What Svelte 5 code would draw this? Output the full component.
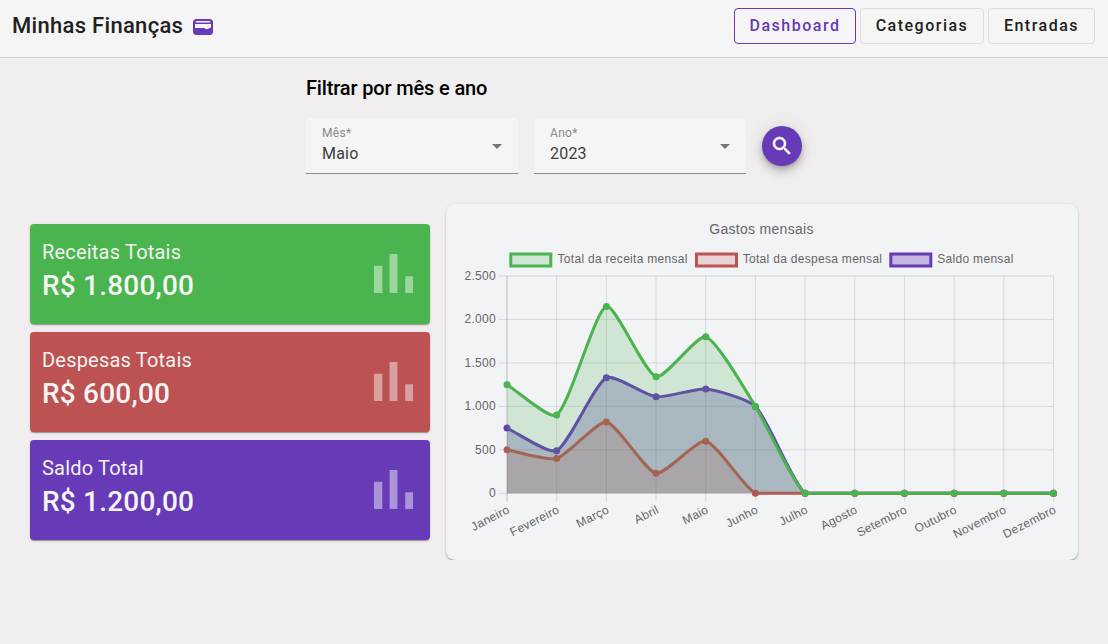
<script>
  const W = 632, H = 356;
  const left = 61, right = 607.5, top = 72, bottom = 289.3;
  const tension = 0.2;
  const labels = ['Janeiro','Fevereiro','Março','Abril','Maio','Junho','Julho','Agosto','Setembro','Outubro','Novembro','Dezembro'];
  const stepX = (right - left) / 11;
  const xAt = (i) => left + i * stepX;
  const yAt = (v) => bottom - (v / 2500) * (bottom - top);
  const clamp = (v, a, b) => Math.min(b, Math.max(a, v));

  function curve(values) {
    const pts = values.map((v, i) => ({ x: xAt(i), y: yAt(v) }));
    const cps = pts.map((p, i) => {
      const prev = pts[i - 1] || p;
      const next = pts[i + 1] || p;
      const d01 = Math.hypot(p.x - prev.x, p.y - prev.y);
      const d12 = Math.hypot(next.x - p.x, next.y - p.y);
      const sum = d01 + d12 || 1;
      const fa = tension * d01 / sum;
      const fb = tension * d12 / sum;
      return {
        px: clamp(p.x - fa * (next.x - prev.x), left, right),
        py: clamp(p.y - fa * (next.y - prev.y), top, bottom),
        nx: clamp(p.x + fb * (next.x - prev.x), left, right),
        ny: clamp(p.y + fb * (next.y - prev.y), top, bottom)
      };
    });
    let d = `M${pts[0].x} ${pts[0].y}`;
    for (let i = 1; i < pts.length; i++) {
      d += `C${cps[i - 1].nx} ${cps[i - 1].ny} ${cps[i].px} ${cps[i].py} ${pts[i].x} ${pts[i].y}`;
    }
    return { pts, line: d, area: `${d}L${right} ${bottom}L${left} ${bottom}Z` };
  }

  const series = [
    { name: 'saldo', color: '#673ab7', fill: 'rgba(95,66,170,.33)', ...curve([750,490,1330,1110,1200,1000,0,0,0,0,0,0]) },
    { name: 'despesa', color: '#bc5252', fill: 'rgba(188,82,82,.2)', ...curve([500,400,820,230,600,0,0,0,0,0,0,0]) },
    { name: 'receita', color: '#4ab44e', fill: 'rgba(76,175,80,.2)', ...curve([1250,900,2150,1340,1800,1000,0,0,0,0,0,0]) }
  ];
  const ticks = [0, 500, 1000, 1500, 2000, 2500];
  const legend = [
    { x: 64.8, tx: 111.5, label: 'Total da receita mensal', color: '#4ab44e', fill: 'rgba(76,175,80,.2)' },
    { x: 250.5, tx: 296.7, label: 'Total da despesa mensal', color: '#bc5252', fill: 'rgba(188,82,82,.2)' },
    { x: 444.8, tx: 491.3, label: 'Saldo mensal', color: '#673ab7', fill: 'rgba(103,58,183,.33)' }
  ];
  const cards = [
    { title: 'Receitas Totais', value: 'R$ 1.800,00', cls: 'green' },
    { title: 'Despesas Totais', value: 'R$ 600,00', cls: 'red' },
    { title: 'Saldo Total', value: 'R$ 1.200,00', cls: 'purple' }
  ];
  const fmt = (t) => t.toLocaleString('pt-BR');
</script>

<header class="topbar">
  <div class="brand">
    <span class="brand-name">Minhas Finanças</span>
    <svg class="wallet" viewBox="0 0 20 16" width="20" height="16" aria-hidden="true">
      <rect width="20" height="16" rx="3.5" fill="#673ab7" />
      <path d="M4 2h12a2 2 0 0 1 1.700 1.500H2.300A2 2 0 0 1 4 2z" fill="#f5f5f5" />
      <path d="M2 5h16v3.500l-3.500 1.600q-1 .5-2-.3L11 9H2z" fill="#f5f5f5" />
    </svg>
  </div>
  <nav class="nav">
    <button class="nav-btn active">Dashboard</button>
    <button class="nav-btn cat">Categorias</button>
    <button class="nav-btn ent">Entradas</button>
  </nav>
</header>

<main class="page">
  <section class="filter">
    <h2>Filtrar por mês e ano</h2>
    <div class="filter-row">
      <div class="select">
        <div class="select-text"><span class="lbl">Mês*</span><span class="val">Maio</span></div>
        <span class="arrow"></span>
      </div>
      <div class="select">
        <div class="select-text"><span class="lbl">Ano*</span><span class="val">2023</span></div>
        <span class="arrow"></span>
      </div>
      <button class="fab" aria-label="Buscar">
        <svg viewBox="0 0 24 24" width="24" height="24"><path fill="#fff" stroke="#fff" stroke-width=".5" d="M15.500 14h-.79l-.28-.27C15.410 12.590 16 11.110 16 9.500 16 5.910 13.090 3 9.500 3S3 5.910 3 9.500 5.910 16 9.500 16c1.610 0 3.090-.59 4.230-1.570l.27.28v.79l5 4.990L20.490 19l-4.990-5zm-6 0C7.010 14 5 11.990 5 9.500S7.010 5 9.500 5 14 7.010 14 9.500 11.990 14 9.500 14z"/></svg>
      </button>
    </div>
  </section>

  <section class="content">
    <div class="cards">
      {#each cards as c}
        <article class="card {c.cls}">
          <div class="card-text">
            <div class="card-title">{c.title}</div>
            <div class="card-value">{c.value}</div>
          </div>
          <svg class="bars" viewBox="0 0 24 24" width="67" height="67" aria-hidden="true">
            <path fill="#fff" d="M5 9.200h3V19H5V9.200zM10.600 5h2.800v14h-2.800V5zm5.600 8H19v6h-2.800v-6z"/>
          </svg>
        </article>
      {/each}
    </div>

    <div class="chart-card">
      <svg class="chart" viewBox="0 0 {W} {H}" width={W} height={H}>
        <text class="title" x={W / 2 - 0.500} y="30" text-anchor="middle">Gastos mensais</text>

        {#each legend as l}
          <rect x={l.x} y="50" width="40" height="12" fill={l.fill} stroke={l.color} stroke-width="3" />
          <text class="tick" x={l.tx} y="59">{l.label}</text>
        {/each}

        {#each ticks as t}
          <line class="grid" x1={left - 8} x2={right} y1={yAt(t)} y2={yAt(t)} />
          <text class="tick" x={left - 11} y={yAt(t) + 4} text-anchor="end">{fmt(t)}</text>
        {/each}
        {#each labels as l, i}
          <line class="grid" class:axis={i === 0} x1={xAt(i)} x2={xAt(i)} y1={top} y2={bottom + 8} />
          <text class="tick" text-anchor="end" transform="translate({xAt(i) + 3.500} {bottom + 19}) rotate(-27)">{l}</text>
        {/each}

        {#each series as s}
          <path d={s.area} fill={s.fill} />
          <path d={s.line} fill="none" stroke={s.color} stroke-width="3" />
          {#each s.pts as p}
            <circle cx={p.x} cy={p.y} r="3.500" fill={s.color} />
          {/each}
        {/each}
      </svg>
    </div>
  </section>
</main>

<style>
  :global(body) {
    background: #f0eeef;
    font-family: Roboto, "Liberation Sans", sans-serif;
  }
  .topbar {
    display: flex;
    justify-content: space-between;
    align-items: center;
    height: 57px;
    padding: 0 13px 0 12px;
    background: #f5f5f5;
    border-bottom: 1px solid #d0d0d0;
  }
  .brand { display: flex; align-items: center; gap: 10px; margin-top: -6px; }
  .brand-name { font-size: 22px; font-weight: 500; letter-spacing: .3px; color: #212121; }
  .wallet { margin-top: 3px; }
  .nav { display: flex; gap: 4px; margin-top: -6px; }
  .nav-btn {
    height: 36px;
    width: 124px;
    border: 1px solid #dcdcdc;
    border-radius: 4px;
    background: transparent;
    font: 500 16px Roboto, sans-serif;
    letter-spacing: 1.500px;
    color: #212121;
    padding: 0;
  }
  .nav-btn.active { width: 122px; border-color: #673ab7; color: #673ab7; }
  .nav-btn.ent { width: 107px; }

  .page { padding: 0 30px; }
  .filter { margin-left: 276px; padding-top: 18px; }
  h2 { margin: 0; font-size: 20px; font-weight: 500; line-height: 24px; letter-spacing: -.15px; color: #000; }
  .filter-row { display: flex; align-items: center; gap: 16px; margin-top: 18px; }
  .select {
    width: 212px;
    height: 56px;
    box-sizing: border-box;
    padding: 8px 16px 0;
    display: flex;
    justify-content: space-between;
    background: #f5f5f5;
    border-radius: 4px 4px 0 0;
    border-bottom: 1px solid #8c8c8c;
  }
  .select-text { display: flex; flex-direction: column; }
  .lbl { font-size: 12px; line-height: 14px; color: #8a8a8a; letter-spacing: .3px; }
  .val { font-size: 16px; line-height: 28px; color: #3d3d3d; letter-spacing: .2px; }
  .arrow {
    width: 0; height: 0;
    margin: 18px 0 0;
    border-left: 5px solid transparent;
    border-right: 5px solid transparent;
    border-top: 5px solid #757575;
  }
  .fab {
    width: 40px; height: 40px;
    border: 0; padding: 0;
    border-radius: 50%;
    background: #673ab7;
    display: flex; align-items: center; justify-content: center;
    box-shadow: 0 3px 5px -1px rgba(0,0,0,.2), 0 6px 10px 0 rgba(0,0,0,.14), 0 1px 18px 0 rgba(0,0,0,.12);
  }

  .content { display: flex; gap: 16px; margin-top: 30px; }
  .cards { display: flex; flex-direction: column; gap: 8px; width: 400px; padding-top: 20px; }
  .card {
    height: 100px;
    box-sizing: border-box;
    padding: 0 3px 0 12px;
    display: flex;
    justify-content: space-between;
    align-items: center;
    border-radius: 4px;
    color: #fff;
    box-shadow: 0 2px 1px -1px rgba(0,0,0,.2), 0 1px 1px 0 rgba(0,0,0,.14), 0 1px 3px 0 rgba(0,0,0,.12);
  }
  .green { background: #4ab44e; }
  .red { background: #bc5252; }
  .purple { background: #673ab7; }
  .card-title { font-size: 20px; line-height: 24px; letter-spacing: .2px; color: #f2f2f2; }
  .card-value { font-size: 28px; font-weight: 500; line-height: 44px; letter-spacing: .2px; color: #f5f5f5; }
  .bars { opacity: .45; margin-top: -2px; }

  .chart-card {
    width: 632px; height: 356px;
    background: #f2f3f5;
    border-radius: 9px;
    box-shadow: 0 2px 3px -1px rgba(0,0,0,.4), 0 0 3px 0 rgba(0,0,0,.07);
  }
  .chart { display: block; }
  .title { font: 14px "Liberation Sans", Arial, sans-serif; fill: #666; letter-spacing: .3px; }
  .tick { font: 12px "Liberation Sans", Arial, sans-serif; fill: #666; letter-spacing: .3px; }
  .grid { stroke: rgba(0,0,0,.11); stroke-width: 1; }
  .grid.axis { stroke: rgba(0,0,0,.22); }
</style>
